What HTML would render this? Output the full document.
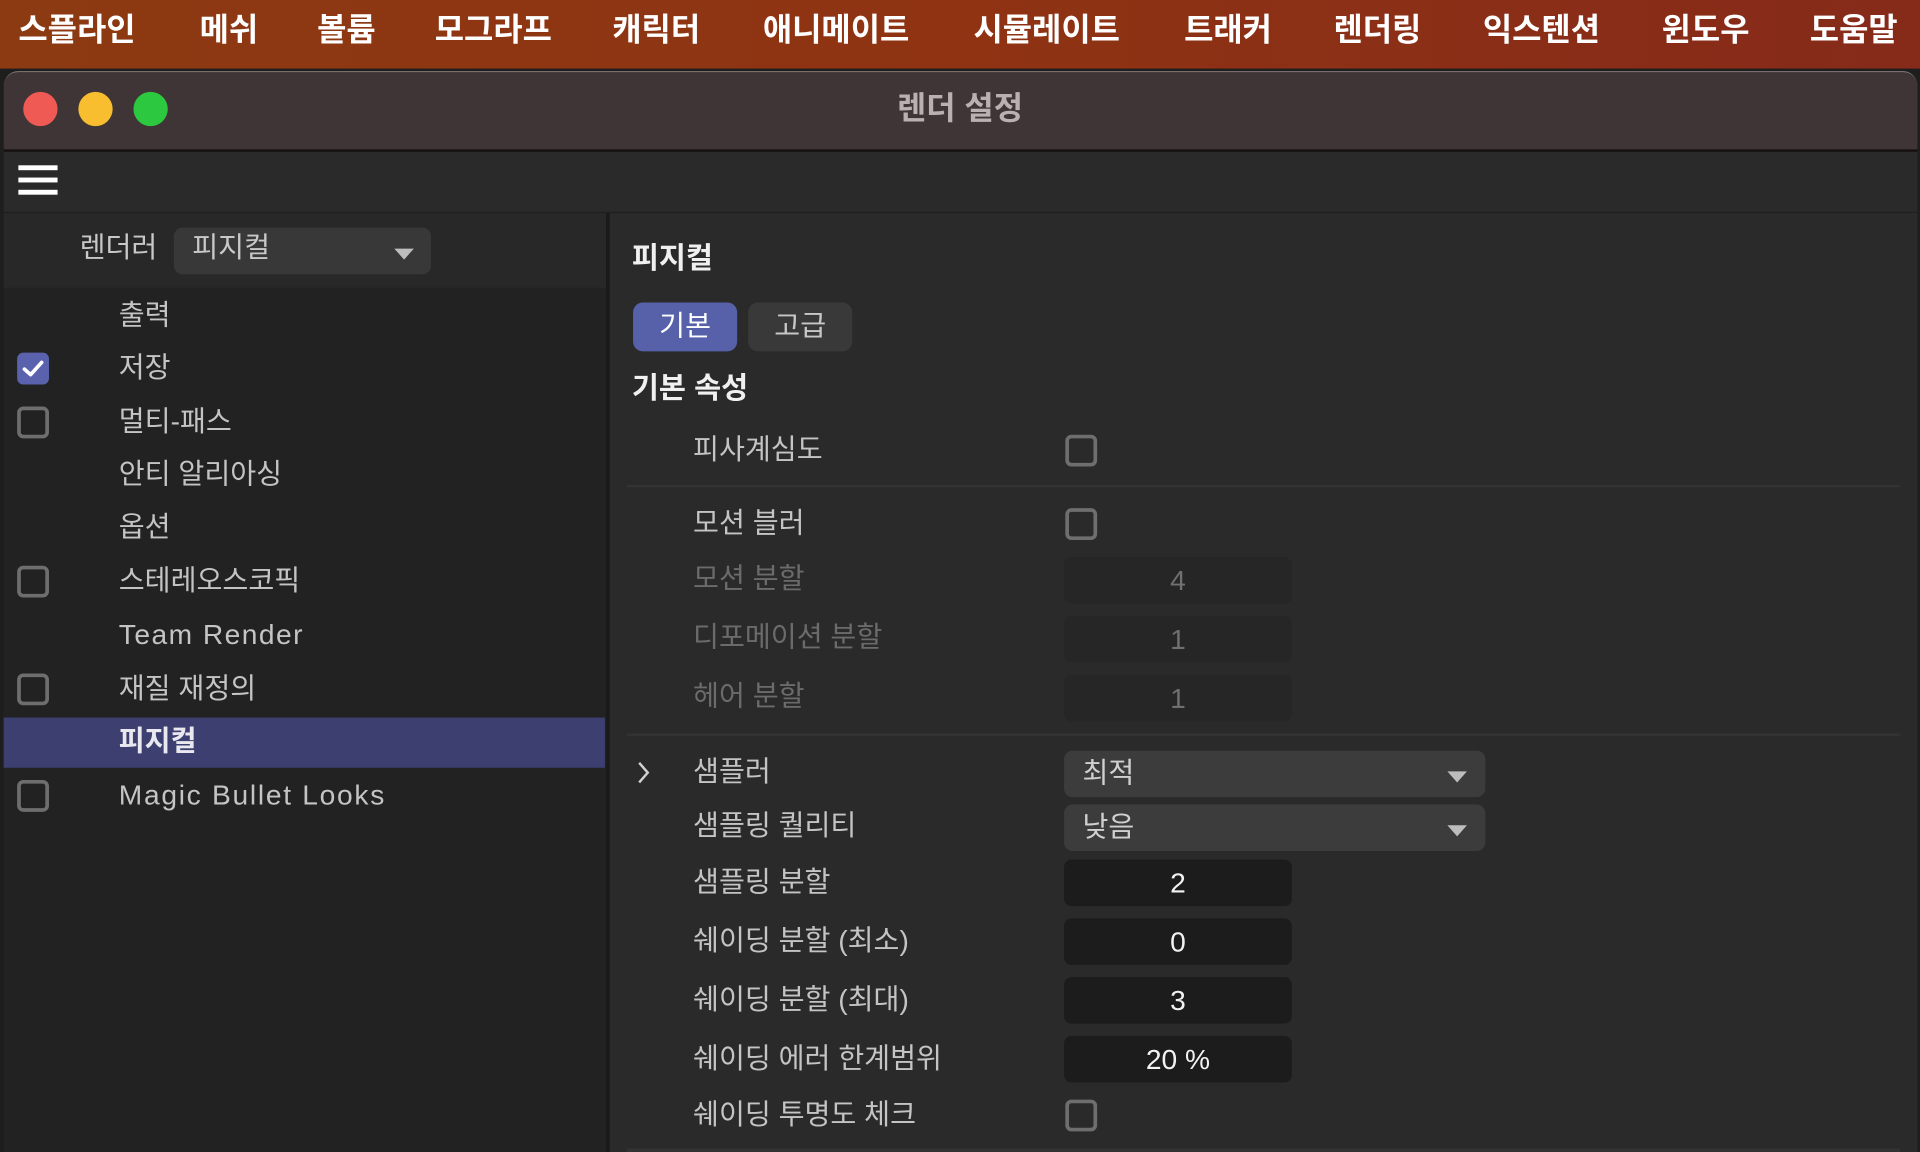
<!DOCTYPE html>
<html><head><meta charset="utf-8">
<style>
html,body{margin:0;padding:0;width:1920px;height:1152px;overflow:hidden;background:#1e1e1e;}
#s{position:absolute;left:0;top:0;width:1568px;height:941px;transform:scale(1.2244898);transform-origin:0 0;overflow:hidden;font-family:"Liberation Sans","Noto Sans CJK KR",sans-serif;}
.a{position:absolute;white-space:nowrap;line-height:30px;}
.m{color:#fff;font-size:26px;font-weight:bold;top:9px;}
.l{color:#c4c4c4;font-size:23px;}
.d{color:#6b6b6b;font-size:23px;}
.cb{position:absolute;width:20px;height:20px;border:3px solid #6e6e6e;border-radius:5px;box-sizing:content-box;}
.f{position:absolute;left:869px;width:186px;height:38px;border-radius:6px;text-align:center;line-height:38px;font-size:23px;}
.dd{position:absolute;left:869px;width:344px;height:38px;border-radius:7px;background:#3c3c3c;color:#d0d0d0;font-size:23px;line-height:36px;}
.tri{position:absolute;width:0;height:0;border-left:8px solid transparent;border-right:8px solid transparent;border-top:9px solid #bdbdbd;}
</style></head><body>
<div id="s">
<div style="position:absolute;left:0;top:0;width:1568px;height:56px;background:linear-gradient(90deg,#8c3a12,#8f3313 50%,#862a1a);"></div>
<div class="a m" style="left:15px">스플라인</div>
<div class="a m" style="left:163px">메쉬</div>
<div class="a m" style="left:259px">볼륨</div>
<div class="a m" style="left:355px">모그라프</div>
<div class="a m" style="left:500px">캐릭터</div>
<div class="a m" style="left:623px">애니메이트</div>
<div class="a m" style="left:795px">시뮬레이트</div>
<div class="a m" style="left:967px">트래커</div>
<div class="a m" style="left:1089px">렌더링</div>
<div class="a m" style="left:1211px">익스텐션</div>
<div class="a m" style="left:1357px">윈도우</div>
<div class="a m" style="left:1478px">도움말</div>
<div style="position:absolute;left:3px;top:58px;width:1563px;height:900px;background:#222;border-radius:12px 12px 0 0;border-top:1px solid #7a7070;overflow:hidden;">
  <div style="position:absolute;left:0;top:0;width:100%;height:63px;background:#403536;border-bottom:2px solid #151010;"></div>
  <div style="position:absolute;left:0;top:65px;width:100%;height:49px;background:#2a2a2a;border-bottom:2px solid #1f1f1f;"></div>
</div>
<div style="position:absolute;left:19px;top:75px;width:28px;height:28px;border-radius:50%;background:#f05a55;"></div>
<div style="position:absolute;left:64px;top:75px;width:28px;height:28px;border-radius:50%;background:#f8be30;"></div>
<div style="position:absolute;left:109px;top:75px;width:28px;height:28px;border-radius:50%;background:#2cc840;"></div>
<div class="a" style="left:0;width:1568px;text-align:center;top:73px;color:#b9b1af;font-size:26px;font-weight:bold;">렌더 설정</div>
<div style="position:absolute;left:15px;top:135px;width:32px;height:4px;background:#fff;"></div>
<div style="position:absolute;left:15px;top:145px;width:32px;height:4px;background:#fff;"></div>
<div style="position:absolute;left:15px;top:155px;width:32px;height:4px;background:#fff;"></div>
<div style="position:absolute;left:3px;top:174px;width:492px;height:767px;background:#222;"></div>
<div style="position:absolute;left:3px;top:174px;width:492px;height:61px;background:#282828;"></div>
<div style="position:absolute;left:495px;top:174px;width:3px;height:767px;background:#1a1a1a;"></div>
<div class="a l" style="left:65px;top:187px;color:#c8c8c8;">렌더러</div>
<div style="position:absolute;left:142px;top:186px;width:210px;height:38px;border-radius:7px;background:#383838;"></div>
<div class="a l" style="left:157px;top:187px;color:#c8c8c8;">피지컬</div>
<div class="tri" style="left:322px;top:203px;"></div>
<div style="position:absolute;left:3px;top:586px;width:491px;height:41px;background:#3c3f70;"></div>
<div class="a l" style="left:97px;top:242px">출력</div>
<div style="position:absolute;left:14px;top:288px;width:26px;height:26px;border-radius:5px;background:#5a62ad;"></div>
<svg style="position:absolute;left:14px;top:288px" width="26" height="26"><path d="M6 13.5 L11 18 L20 8" stroke="#fff" stroke-width="3" fill="none" stroke-linecap="round" stroke-linejoin="round"/></svg>
<div class="a l" style="left:97px;top:285px">저장</div>
<div class="cb" style="left:14px;top:332px"></div>
<div class="a l" style="left:97px;top:329px">멀티-패스</div>
<div class="a l" style="left:97px;top:372px">안티 알리아싱</div>
<div class="a l" style="left:97px;top:415px">옵션</div>
<div class="cb" style="left:14px;top:462px"></div>
<div class="a l" style="left:97px;top:459px">스테레오스코픽</div>
<div class="a l" style="left:97px;top:503px;letter-spacing:1.2px;">Team Render</div>
<div class="cb" style="left:14px;top:550px"></div>
<div class="a l" style="left:97px;top:547px">재질 재정의</div>
<div class="a l" style="left:97px;top:590px;color:#e8e8ee;font-weight:bold;">피지컬</div>
<div class="cb" style="left:14px;top:637px"></div>
<div class="a l" style="left:97px;top:634px;letter-spacing:1.4px;">Magic Bullet Looks</div>
<div style="position:absolute;left:498px;top:174px;width:1068px;height:767px;background:#2a2a2a;"></div>
<div class="a" style="left:516px;top:197px;color:#f0f0f0;font-size:24px;font-weight:bold;">피지컬</div>
<div style="position:absolute;left:517px;top:247px;width:85px;height:40px;border-radius:8px;background:#5661a9;color:#fff;font-size:23px;text-align:center;line-height:38px;">기본</div>
<div style="position:absolute;left:611px;top:247px;width:85px;height:40px;border-radius:8px;background:#393939;color:#c8c8c8;font-size:23px;text-align:center;line-height:38px;">고급</div>
<div class="a" style="left:516px;top:303px;color:#f0f0f0;font-size:24px;font-weight:bold;">기본 속성</div>
<div class="a l" style="left:566px;top:352px">피사계심도</div>
<div class="cb" style="left:870px;top:355px"></div>
<div style="position:absolute;left:512px;top:396px;width:1040px;height:2px;background:#333;"></div>
<div class="a l" style="left:566px;top:412px">모션 블러</div>
<div class="cb" style="left:870px;top:415px"></div>
<div class="a d" style="left:566px;top:457px">모션 분할</div>
<div class="f" style="top:455px;background:#262626;color:#707070;">4</div>
<div class="a d" style="left:566px;top:505px">디포메이션 분할</div>
<div class="f" style="top:503px;background:#262626;color:#707070;">1</div>
<div class="a d" style="left:566px;top:553px">헤어 분할</div>
<div class="f" style="top:551px;background:#262626;color:#707070;">1</div>
<div style="position:absolute;left:512px;top:599px;width:1040px;height:2px;background:#333;"></div>
<svg style="position:absolute;left:518px;top:620px" width="16" height="22"><path d="M4 3 L11 11 L4 19" stroke="#d0d0d0" stroke-width="2" fill="none"/></svg>
<div class="a l" style="left:566px;top:615px">샘플러</div>
<div class="dd" style="top:613px"><span style="position:absolute;left:15px;">최적</span></div>
<div class="tri" style="left:1182px;top:630px;"></div>
<div class="a l" style="left:566px;top:659px">샘플링 퀄리티</div>
<div class="dd" style="top:657px"><span style="position:absolute;left:15px;">낮음</span></div>
<div class="tri" style="left:1182px;top:674px;"></div>
<div class="a l" style="left:566px;top:705px">샘플링 분할</div>
<div class="f" style="top:702px;background:#1c1c1c;color:#f2f2f2;">2</div>
<div class="a l" style="left:566px;top:753px">쉐이딩 분할 (최소)</div>
<div class="f" style="top:750px;background:#1c1c1c;color:#f2f2f2;">0</div>
<div class="a l" style="left:566px;top:801px">쉐이딩 분할 (최대)</div>
<div class="f" style="top:798px;background:#1c1c1c;color:#f2f2f2;">3</div>
<div class="a l" style="left:566px;top:849px">쉐이딩 에러 한계범위</div>
<div class="f" style="top:846px;background:#1c1c1c;color:#f2f2f2;">20 %</div>
<div class="a l" style="left:566px;top:895px">쉐이딩 투명도 체크</div>
<div class="cb" style="left:870px;top:898px"></div>
<div style="position:absolute;left:512px;top:938px;width:1040px;height:3px;background:#333;"></div>
</div>
</body></html>
